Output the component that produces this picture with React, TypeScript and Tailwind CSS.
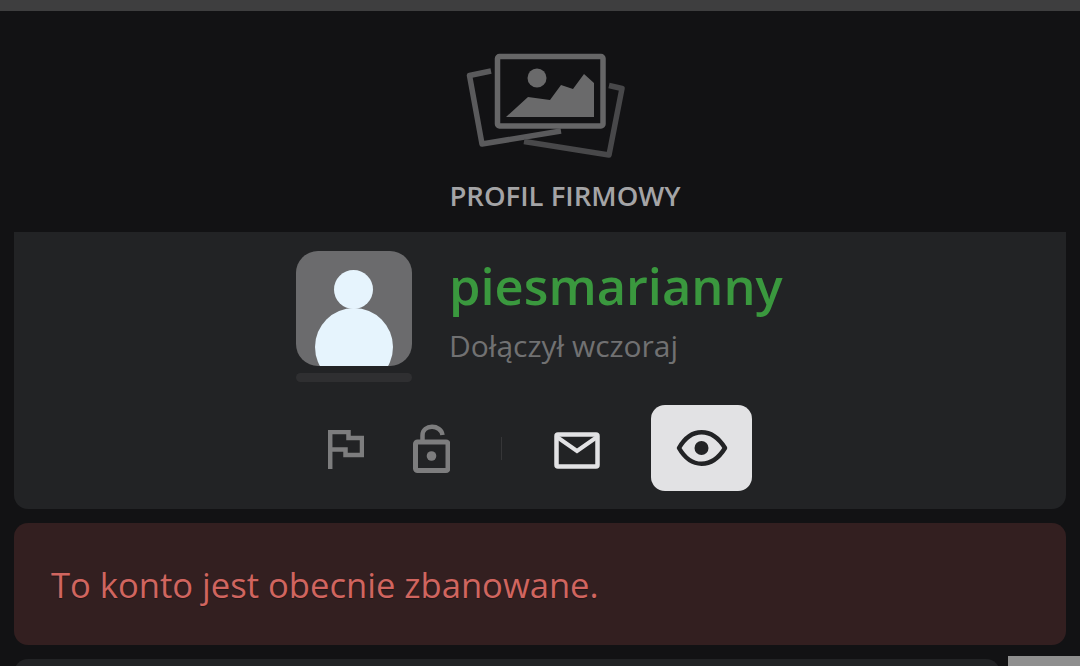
import React from "react";

function PhotosIcon() {
  return (
    <svg width="170" height="110" viewBox="460 50 170 110" fill="none" className="block">
      <path d="M490 71L468.500 75.500L481 144L560 131" stroke="#5a5a5c" strokeWidth="5.500" strokeLinejoin="round" fill="none" />
      <path d="M608 85.500L621 88.500L608 155L523 141.500" stroke="#48484a" strokeWidth="5.500" strokeLinejoin="round" fill="none" />
      <rect x="496.500" y="56.500" width="105.500" height="69.500" rx="2" stroke="#666667" strokeWidth="5.500" />
      <circle cx="536" cy="78" r="9.500" fill="#6a6a6b" />
      <path d="M505 117L527 97L549 100L560 85L572 89L583 74L593 83V117Z" fill="#6a6a6b" />
    </svg>
  );
}

function FlagIcon() {
  return (
    <svg width="36" height="40" viewBox="328 430 36 40" fill="none" className="block">
      <path d="M330.200 469V432H348.500V438H362V455H345.500V449.500H332" stroke="#7d7d7e" strokeWidth="4.500" />
    </svg>
  );
}

function LockIcon() {
  return (
    <svg width="38" height="49" viewBox="412 424 38 49" fill="none" className="block">
      <rect x="415.500" y="442" width="32.500" height="28.500" rx="2" stroke="#7d7d7e" strokeWidth="5" />
      <path d="M422.500 441V435.500C422.500 424 441 424 442.500 435" stroke="#7d7d7e" strokeWidth="4.500" />
      <circle cx="431.500" cy="456" r="4.800" fill="#7d7d7e" />
    </svg>
  );
}

function MailIcon() {
  return (
    <svg width="46" height="37" viewBox="554 432 46 37" fill="none" className="block">
      <rect x="556.500" y="434.500" width="41" height="32" rx="1.500" stroke="#e2e2e4" strokeWidth="4.500" />
      <path d="M557 437L577 451L597 437" stroke="#e2e2e4" strokeWidth="4" />
    </svg>
  );
}

function EyeIcon() {
  return (
    <svg width="52" height="36" viewBox="676 430 52 36" fill="none" className="block">
      <path d="M679 448C691 427 712 427 725 448C712 469 691 469 679 448Z" stroke="#222325" strokeWidth="4.500" strokeLinejoin="round" />
      <circle cx="701.500" cy="448" r="7" fill="#222325" />
    </svg>
  );
}

export default function App() {
  return (
    <div
      className="relative h-[666px] w-[1080px] overflow-hidden bg-[#121214]"
      style={{ fontFamily: '"Open Sans", "Noto Sans", sans-serif' }}
    >
      <div className="h-[11px] bg-[#3e3e3f]" />

      <header className="flex h-[221px] flex-col items-center">
        <div className="mt-[39px] ml-[11px]">
          <PhotosIcon />
        </div>
        <h1 className="mt-[17px] ml-[50px] text-[27.500px] leading-[37px] font-semibold whitespace-nowrap text-[#a4a4a6]">PROFIL FIRMOWY</h1>
      </header>

      <section className="mx-[14px] h-[277px] rounded-b-[14px] bg-[#222325] pt-[19px]">
        <div className="flex justify-center pr-px">
          <div className="w-[116px]">
            <div className="relative h-[115px] overflow-hidden rounded-[22px] bg-[#6b6b6d]">
              <div className="absolute top-[19px] left-[38px] size-[39px] rounded-full bg-[#e6f4fd]" />
              <div className="absolute top-[57px] left-[19px] size-[78px] rounded-full bg-[#e6f4fd]" />
            </div>
            <div className="mt-[7px] h-[9px] rounded-full bg-[#2f2f31]" />
          </div>
          <div className="ml-[37px] flex w-[334px] flex-col">
            <h2 className="text-[50.600px] leading-[69px] font-semibold whitespace-nowrap text-[#3a983e]">piesmarianny</h2>
            <p className="mt-[5px] text-[30px] leading-[41px] whitespace-nowrap text-[#717172]">Dołączył wczoraj</p>
          </div>
        </div>

        <div className="mt-[23px] flex h-[86px] items-center justify-center">
          <div className="mt-[3px]">
            <FlagIcon />
          </div>
          <div className="ml-[48px]">
            <LockIcon />
          </div>
          <div className="ml-[51px] h-[23px] w-px bg-[#363638]" />
          <div className="mt-[4px] ml-[52px]">
            <MailIcon />
          </div>
          <button className="ml-[51px] flex h-[86px] w-[101px] items-center justify-center rounded-[14px] bg-[#e2e2e4]">
            <EyeIcon />
          </button>
        </div>
      </section>

      <section className="mx-[14px] mt-[14px] flex h-[122px] items-center rounded-[14px] bg-[#331f20] pl-[37px]">
        <p className="text-[34.600px] leading-[47px] whitespace-nowrap text-[#d0655f] [text-shadow:0_1px_1px_#0000004d]">To konto jest obecnie zbanowane.</p>
      </section>

      <div className="mt-[14px] ml-[14px] h-[20px] w-[986px] rounded-t-[14px] bg-[#222325]" />
      <div className="absolute top-[656px] right-0 h-[10px] w-[72px] bg-[#8f8f8f]" />
    </div>
  );
}
